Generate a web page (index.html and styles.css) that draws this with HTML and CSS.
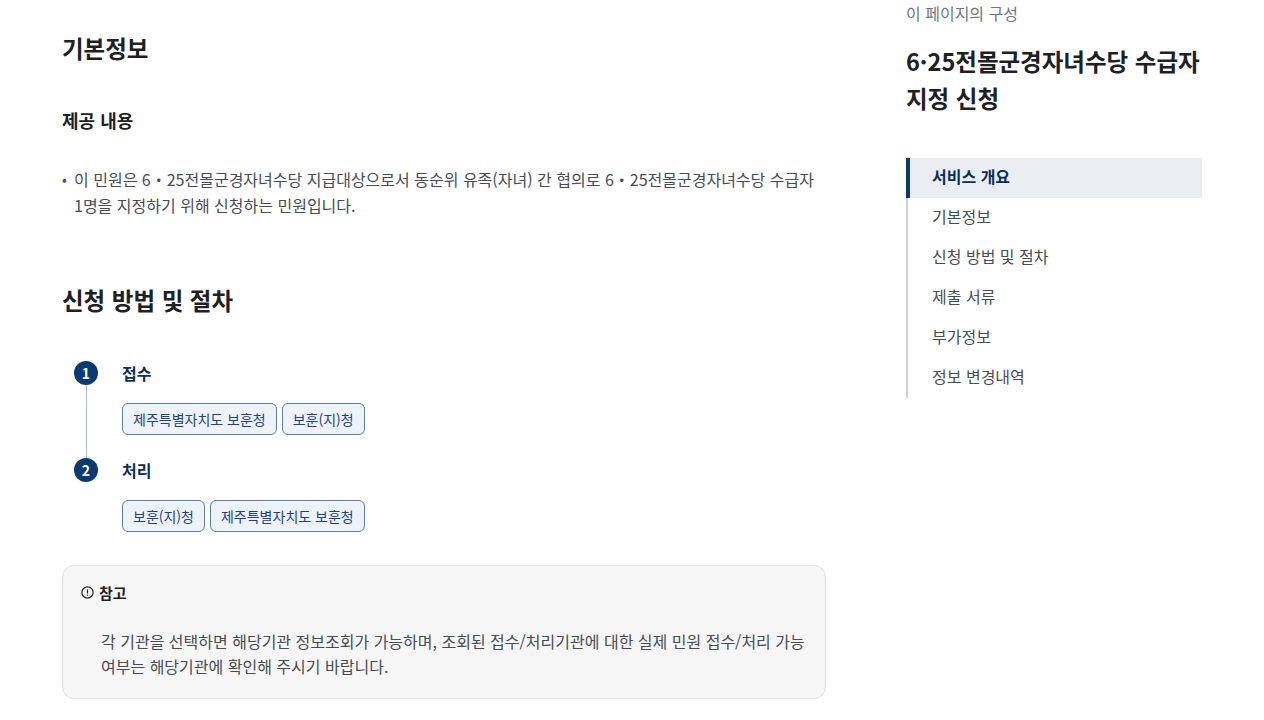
FILE: index.html
```html
<!DOCTYPE html>
<html lang="ko">
<head>
<meta charset="utf-8">
<title>6·25전몰군경자녀수당 수급자 지정 신청</title>
<link rel="stylesheet" href="styles.css">
</head>
<body>
<div class="page">
  <main class="main">
    <section class="sec">
      <h2 class="h2">기본정보</h2>
      <h3 class="h3">제공 내용</h3>
      <ul class="bullets">
        <li>이 민원은 6・25전몰군경자녀수당 지급대상으로서 동순위 유족(자녀) 간 협의로 6・25전몰군경자녀수당 수급자 1명을 지정하기 위해 신청하는 민원입니다.</li>
      </ul>
    </section>
    <section class="sec sec-steps">
      <h2 class="h2">신청 방법 및 절차</h2>
      <ol class="steps">
        <li class="step">
          <div class="step-head"><span class="num">1</span><span class="step-title">접수</span></div>
          <div class="chips"><span class="chip">제주특별자치도 보훈청</span><span class="chip">보훈(지)청</span></div>
        </li>
        <li class="step last">
          <div class="step-head"><span class="num">2</span><span class="step-title">처리</span></div>
          <div class="chips"><span class="chip">보훈(지)청</span><span class="chip">제주특별자치도 보훈청</span></div>
        </li>
      </ol>
      <div class="note">
        <div class="note-title">
          <svg class="note-icon" width="13" height="13" viewBox="0 0 13 13" aria-hidden="true"><circle cx="6.5" cy="6.5" r="5.6" fill="none" stroke="#1e2124" stroke-width="1.2"/><rect x="5.9" y="3.2" width="1.2" height="4.4" rx="0.6" fill="#1e2124"/><circle cx="6.5" cy="9.3" r="0.75" fill="#1e2124"/></svg>
          <span>참고</span>
        </div>
        <p class="note-text">각 기관을 선택하면 해당기관 정보조회가 가능하며, 조회된 접수/처리기관에 대한 실제 민원 접수/처리 가능 여부는 해당기관에 확인해 주시기 바랍니다.</p>
      </div>
    </section>
  </main>
  <aside class="side">
    <p class="side-label">이 페이지의 구성</p>
    <h2 class="side-title">6·25전몰군경자녀수당 수급자 지정 신청</h2>
    <nav class="toc">
      <a class="toc-item active">서비스 개요</a>
      <a class="toc-item">기본정보</a>
      <a class="toc-item">신청 방법 및 절차</a>
      <a class="toc-item">제출 서류</a>
      <a class="toc-item">부가정보</a>
      <a class="toc-item">정보 변경내역</a>
    </nav>
  </aside>
</div>
</body>
</html>
```
FILE: styles.css
```css
* { box-sizing: border-box; }
html, body { margin: 0; padding: 0; background: #fff; }
body {
  font-family: "Noto Sans CJK KR", "Noto Sans", sans-serif;
  color: #1e2124;
  overflow: hidden;
  word-break: keep-all;
}
.page {
  display: flex;
  gap: 80px;
  padding-left: 62px;
  width: 1264px;
  height: 720px;
}
.main {
  width: 764px;
  flex: none;
  padding-top: 31px;
}
.h2 {
  margin: 0;
  font-size: 23.5px;
  line-height: 34px;
  font-weight: 700;
  color: #1e2124;
}
.h3 {
  margin: 42px 0 0;
  font-size: 18px;
  line-height: 26px;
  font-weight: 700;
  color: #1e2124;
}
.bullets {
  list-style: none;
  margin: 33px 0 0;
  padding: 0;
}
.bullets li {
  position: relative;
  padding-left: 12px;
  font-size: 16px;
  line-height: 26px;
  color: #464c53;
}
.bullets li::before {
  content: "•";
  position: absolute;
  left: 0;
  top: 0;
  font-size: 14px;
  color: #464c53;
}
.sec-steps { margin-top: 65px; }
.steps {
  list-style: none;
  margin: 44px 0 0;
  padding: 0;
}
.step { position: relative; padding-left: 60px; }
.step + .step { margin-top: 23px; }
.step::before {
  content: "";
  position: absolute;
  left: 24px;
  top: 24px;
  bottom: -35px;
  width: 1px;
  background: #b1b8be;
}
.step.last::before { display: none; }
.step-head {
  display: flex;
  align-items: center;
  height: 24px;
}
.num {
  position: absolute;
  left: 12px;
  top: 0;
  width: 24px;
  height: 24px;
  border-radius: 50%;
  background: #0b3a72;
  color: #fff;
  font-size: 14px;
  font-weight: 700;
  display: flex;
  align-items: center;
  justify-content: center;
  line-height: 1;
}
.step-title {
  font-size: 16px;
  font-weight: 700;
  color: #0b2e5a;
}
.chips {
  display: flex;
  gap: 5px;
  margin-top: 18px;
}
.chip {
  height: 32px;
  padding: 0 10px;
  display: flex;
  align-items: center;
  border: 1px solid #5f80b6;
  border-radius: 6px;
  background: #eef3fb;
  color: #1d4382;
  font-size: 14px;
}
.note {
  margin-top: 33px;
  border: 1px solid #e1e3e6;
  border-radius: 12px;
  background: #f6f6f6;
  padding: 15px 18px 19px;
}
.note-title {
  display: flex;
  align-items: center;
  gap: 5px;
  height: 22px;
  font-size: 15px;
  font-weight: 700;
  color: #1e2124;
}
.note-icon { flex: none; }
.note-text {
  margin: 26px 0 0;
  padding-left: 20px;
  font-size: 16px;
  line-height: 25px;
  color: #464c53;
}
.side {
  width: 296px;
  flex: none;
  padding-top: 2px;
}
.side-label {
  margin: 0;
  font-size: 16px;
  line-height: 22px;
  color: #6d7882;
}
.side-title {
  margin: 19px 0 0;
  font-size: 23.5px;
  line-height: 37px;
  font-weight: 700;
  color: #1e2124;
}
.toc {
  margin-top: 41px;
  display: flex;
  flex-direction: column;
  border-left: 2px solid #cdd1d5;
}
.toc-item {
  height: 40px;
  display: flex;
  align-items: center;
  padding-left: 24px;
  padding-bottom: 4px;
  font-size: 16px;
  color: #464c53;
}
.toc-item.active {
  margin-left: -2px;
  border-left: 4px solid #0b3a72;
  padding-left: 22px;
  background: #eaeef3;
  font-weight: 700;
  color: #0b2e5a;
}
```
